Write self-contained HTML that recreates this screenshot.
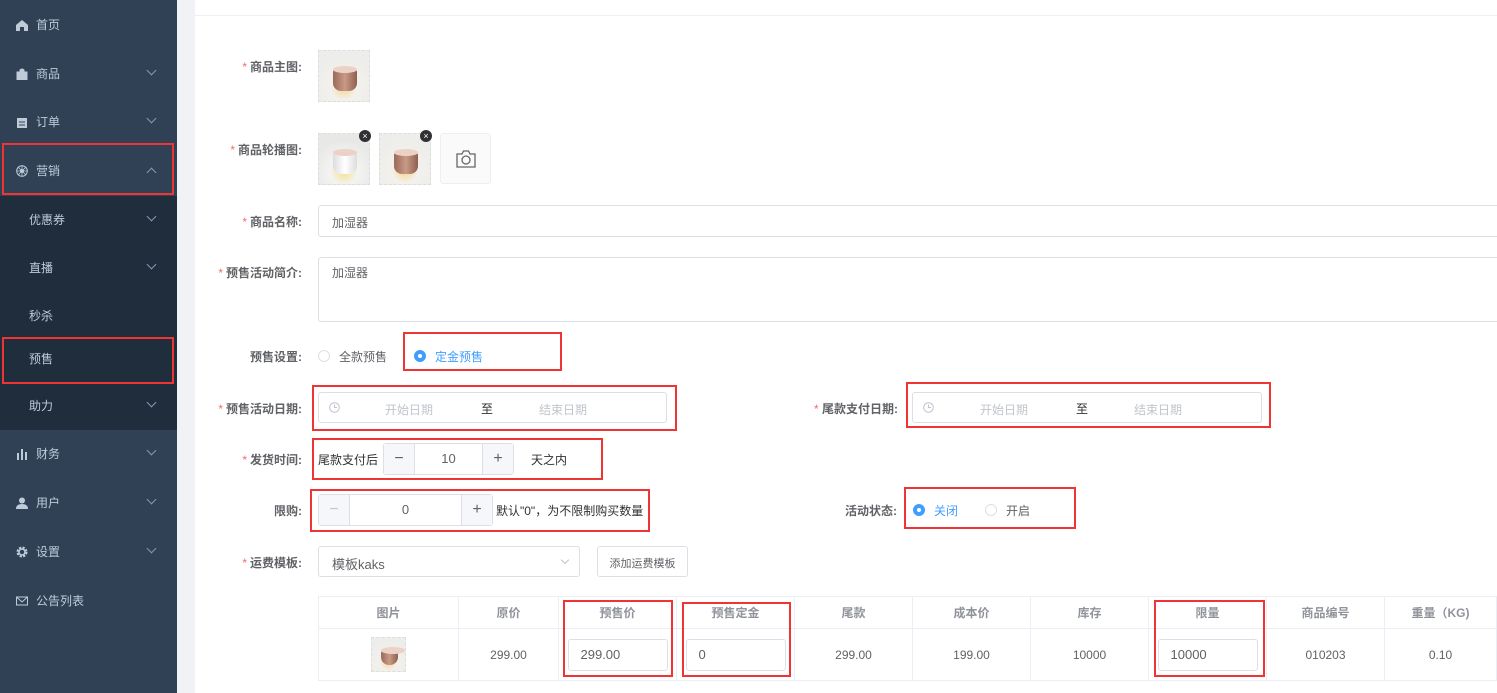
<!DOCTYPE html>
<html><head><meta charset="utf-8"><style>
*{box-sizing:border-box;margin:0;padding:0}
body{width:1497px;height:693px;overflow:hidden;background:#f0f2f5;font-family:"Liberation Sans","Noto Sans CJK SC",sans-serif;font-size:12px;color:#606266;position:relative}
.a{position:absolute}
#sb{left:0;top:0;width:177px;height:693px;background:#304156}
#sub{left:0;top:196px;width:177px;height:234px;background:#1f2d3d}
.mi{position:absolute;left:0;width:177px;color:#bfcbd9;font-size:12px;line-height:20px}
.mi .ic{position:absolute;left:16px;top:4px;width:12px;height:12px}
.mi .t{position:absolute;left:36px}
.mi .s{position:absolute;left:29px}
.mi .ar{position:absolute;left:148px;top:3px;width:7px;height:7px;border-right:1px solid #8a97a8;border-bottom:1px solid #8a97a8;transform:rotate(45deg)}
.mi .up{transform:rotate(-135deg);top:8px}
.red{position:absolute;border:2px solid #f03434}
#main{left:195px;top:0;width:1302px;height:693px;background:#fff}
.lbl{position:absolute;right:1195px;text-align:right;font-weight:bold;color:#606266;white-space:nowrap}
.lbl b{color:#f56c6c;font-weight:normal;margin-right:3px}
.inp{position:absolute;border:1px solid #dcdfe6;border-radius:3px;background:#fff;color:#606266}
.th{width:52px;height:52px;border:1px dashed #ddd;background:radial-gradient(circle at 50% 72%,#f5d48a 0,#f3f1ec 30%,#ededeb 70%);}
.cyl{position:absolute;left:14px;top:18px;width:24px;height:22px;border-radius:3px 3px 8px 8px;background:linear-gradient(90deg,#9a6a5a,#c99a86,#8f5e50)}
.cyl:before{content:"";position:absolute;left:0;top:-3px;width:24px;height:7px;border-radius:50%;background:#ecd2c6}
.x{position:absolute;width:12px;height:12px;border-radius:6px;background:#303133;color:#fff;font-size:9px;line-height:12px;text-align:center}
.rad{position:absolute;width:12px;height:12px;border-radius:6px;border:1px solid #dcdfe6;background:#fff}
.rad.on{background:#409eff;border-color:#409eff}
.rad.on:after{content:"";position:absolute;left:3px;top:3px;width:4px;height:4px;border-radius:2px;background:#fff}
.step{position:absolute;border:1px solid #dcdfe6;border-radius:3px;height:32px;background:#fff}
.step .bt{position:absolute;top:0;width:31px;height:30px;background:#f5f7fa;color:#606266;text-align:center;line-height:30px;font-size:16px}
table{position:absolute;left:318px;top:596px;width:1179px;border-collapse:collapse;font-size:12px;text-align:center}
td{border:1px solid #ebeef5;color:#606266}
tr.h td{height:32px;font-weight:bold;color:#909399}
tr.b td{height:52px}
.ti{display:inline-block;border:1px solid #dcdfe6;border-radius:3px;height:32px;width:100px;text-align:left;padding-left:12px;line-height:30px;font-size:13px}
</style></head><body>
<div id="sb" class="a"></div>
<div id="sub" class="a"></div>
<div class="mi" style="top:15px"><svg class="ic" viewBox="0 0 12 12"><path d="M0 6L6 1 12 6V12H8V8H4V12H0Z" fill="#bfcbd9"/></svg><span class="t">首页</span></div>
<div class="mi" style="top:64px"><svg class="ic" viewBox="0 0 12 12"><path d="M1 4H11V12H1Z M4 4V2Q6 0 8 2V4" fill="#bfcbd9" stroke="#bfcbd9"/></svg><span class="t">商品</span><i class="ar"></i></div>
<div class="mi" style="top:112px"><svg class="ic" viewBox="0 0 12 12"><path d="M1 2H11V12H1Z" fill="#bfcbd9"/><path d="M3 6H9M3 9H9" stroke="#304156"/></svg><span class="t">订单</span><i class="ar"></i></div>
<div class="mi" style="top:161px"><svg class="ic" viewBox="0 0 12 12"><circle cx="6" cy="6" r="5.3" fill="none" stroke="#bfcbd9"/><circle cx="6" cy="6" r="1.5" fill="none" stroke="#bfcbd9"/><path d="M6 1V11M1 6H11M2.5 2.5L9.5 9.5M9.5 2.5L2.5 9.5" stroke="#bfcbd9" stroke-width=".8"/></svg><span class="t">营销</span><i class="ar up"></i></div>
<div class="mi" style="top:210px"><span class="s">优惠券</span><i class="ar"></i></div>
<div class="mi" style="top:258px"><span class="s">直播</span><i class="ar"></i></div>
<div class="mi" style="top:306px"><span class="s">秒杀</span></div>
<div class="mi" style="top:349px"><span class="s">预售</span></div>
<div class="mi" style="top:396px"><span class="s">助力</span><i class="ar"></i></div>
<div class="mi" style="top:444px"><svg class="ic" viewBox="0 0 12 12"><path d="M1 5H3V12H1ZM5 1H7V12H5ZM9 4H11V12H9Z" fill="#bfcbd9"/></svg><span class="t">财务</span><i class="ar"></i></div>
<div class="mi" style="top:493px"><svg class="ic" viewBox="0 0 12 12"><circle cx="6" cy="3.5" r="3" fill="#bfcbd9"/><path d="M0 12Q0 7 6 7Q12 7 12 12Z" fill="#bfcbd9"/></svg><span class="t">用户</span><i class="ar"></i></div>
<div class="mi" style="top:542px"><svg class="ic" viewBox="0 0 12 12"><circle cx="6" cy="6" r="4" fill="none" stroke="#bfcbd9" stroke-width="3" stroke-dasharray="2 1.2"/><circle cx="6" cy="6" r="3" fill="none" stroke="#bfcbd9" stroke-width="1.5"/></svg><span class="t">设置</span><i class="ar"></i></div>
<div class="mi" style="top:591px"><svg class="ic" viewBox="0 0 12 12"><path d="M.5 2H11.5V10H.5ZM.5 2L6 7 11.5 2" fill="none" stroke="#bfcbd9"/></svg><span class="t">公告列表</span></div>
<div class="red" style="left:2px;top:143px;width:172px;height:52px"></div>
<div class="red" style="left:2px;top:337px;width:172px;height:47px"></div>

<div id="main" class="a"><div class="a" style="left:0;top:15px;width:1302px;height:1px;background:#eef0f4"></div></div>

<div class="lbl" style="top:58px"><b>*</b>商品主图:</div>
<div class="a th" style="left:318px;top:50px"><div class="cyl"></div></div>
<div class="lbl" style="top:141px"><b>*</b>商品轮播图:</div>
<div class="a th" style="left:318px;top:133px;background:radial-gradient(circle at 50% 75%,#f5e08a 0,#f3f3f1 30%,#e8e8e6 70%)"><div class="cyl" style="background:linear-gradient(90deg,#ddd,#fff,#ddd)"></div></div>
<div class="x" style="left:359px;top:130px">×</div>
<div class="a th" style="left:379px;top:133px"><div class="cyl"></div></div>
<div class="x" style="left:420px;top:130px">×</div>
<div class="a" style="left:440px;top:133px;width:51px;height:51px;border:1px solid #eee;border-radius:3px;background:#fafafa"><svg style="position:absolute;left:15px;top:16px" width="20" height="18" viewBox="0 0 20 18"><path d="M1 4H6L7.5 1H12.5L14 4H19V17H1Z" fill="none" stroke="#666" stroke-width="1.3"/><circle cx="10" cy="10" r="4" fill="none" stroke="#666" stroke-width="1.3"/></svg></div>

<div class="lbl" style="top:213px"><b>*</b>商品名称:</div>
<div class="inp" style="left:318px;top:205px;width:1190px;height:32px;padding:8px 13px">加湿器</div>
<div class="lbl" style="top:264px"><b>*</b>预售活动简介:</div>
<div class="inp" style="left:318px;top:257px;width:1190px;height:65px;padding:6px 13px">加湿器</div>

<div class="lbl" style="top:348px">预售设置:</div>
<div class="rad" style="left:318px;top:350px"></div><div class="a" style="left:339px;top:348px">全款预售</div>
<div class="rad on" style="left:414px;top:350px"></div><div class="a" style="left:435px;top:348px;color:#409eff">定金预售</div>
<div class="red" style="left:403px;top:332px;width:159px;height:39px"></div>

<div class="lbl" style="top:400px"><b>*</b>预售活动日期:</div>
<div class="inp" style="left:318px;top:392px;width:349px;height:31px"><svg class="a" style="left:10px;top:9px" width="11" height="11" viewBox="0 0 11 11"><circle cx="5.5" cy="5.5" r="4.8" fill="none" stroke="#c0c4cc"/><path d="M5.5 2.5V5.5H8" fill="none" stroke="#c0c4cc"/></svg><span class="a" style="left:66px;top:8px;color:#c0c4cc">开始日期</span><span class="a" style="left:162px;top:7px;color:#303133">至</span><span class="a" style="left:220px;top:8px;color:#c0c4cc">结束日期</span></div>
<div class="red" style="left:312px;top:385px;width:365px;height:46px"></div>
<div class="a" style="left:814px;top:400px;font-weight:bold"><b style="color:#f56c6c;font-weight:normal">*</b> 尾款支付日期:</div>
<div class="inp" style="left:912px;top:392px;width:350px;height:31px"><svg class="a" style="left:10px;top:9px" width="11" height="11" viewBox="0 0 11 11"><circle cx="5.5" cy="5.5" r="4.8" fill="none" stroke="#c0c4cc"/><path d="M5.5 2.5V5.5H8" fill="none" stroke="#c0c4cc"/></svg><span class="a" style="left:67px;top:8px;color:#c0c4cc">开始日期</span><span class="a" style="left:163px;top:7px;color:#303133">至</span><span class="a" style="left:221px;top:8px;color:#c0c4cc">结束日期</span></div>
<div class="red" style="left:906px;top:382px;width:365px;height:46px"></div>

<div class="lbl" style="top:451px"><b>*</b>发货时间:</div>
<div class="a" style="left:318px;top:451px;color:#303133">尾款支付后</div>
<div class="step" style="left:383px;top:443px;width:131px"><div class="bt" style="left:0;border-right:1px solid #dcdfe6">−</div><div class="a" style="left:31px;width:67px;top:7px;text-align:center;font-size:13px">10</div><div class="bt" style="right:0;border-left:1px solid #dcdfe6">+</div></div>
<div class="a" style="left:531px;top:451px;color:#303133">天之内</div>
<div class="red" style="left:312px;top:438px;width:291px;height:42px"></div>

<div class="lbl" style="top:502px">限购:</div>
<div class="step" style="left:318px;top:494px;width:175px"><div class="bt" style="left:0;border-right:1px solid #dcdfe6;color:#c0c4cc">−</div><div class="a" style="left:31px;width:111px;top:7px;text-align:center;font-size:13px">0</div><div class="bt" style="right:0;border-left:1px solid #dcdfe6">+</div></div>
<div class="a" style="left:496px;top:502px;color:#303133">默认"0"，为不限制购买数量</div>
<div class="red" style="left:310px;top:489px;width:340px;height:43px"></div>
<div class="a" style="left:845px;top:502px;font-weight:bold">活动状态:</div>
<div class="rad on" style="left:913px;top:504px"></div><div class="a" style="left:934px;top:502px;color:#409eff">关闭</div>
<div class="rad" style="left:985px;top:504px"></div><div class="a" style="left:1006px;top:502px">开启</div>
<div class="red" style="left:904px;top:487px;width:172px;height:42px"></div>

<div class="lbl" style="top:554px"><b>*</b>运费模板:</div>
<div class="inp" style="left:318px;top:546px;width:262px;height:31px;padding:7px 13px;font-size:13px">模板kaks<i class="a" style="left:243px;top:10px;width:6px;height:6px;border-right:1px solid #c0c4cc;border-bottom:1px solid #c0c4cc;transform:rotate(45deg)"></i></div>
<div class="inp" style="left:597px;top:546px;width:91px;height:31px;padding:8px 0;text-align:center;font-size:11px">添加运费模板</div>

<table><colgroup><col style="width:140px"><col style="width:100px"><col style="width:118px"><col style="width:118px"><col style="width:118px"><col style="width:118px"><col style="width:118px"><col style="width:118px"><col style="width:118px"><col></colgroup>
<tr class="h"><td>图片</td><td>原价</td><td>预售价</td><td>预售定金</td><td>尾款</td><td>成本价</td><td>库存</td><td>限量</td><td>商品编号</td><td>重量（KG)</td></tr>
<tr class="b"><td><div class="th" style="display:inline-block;width:35px;height:35px;position:relative;vertical-align:middle"><div class="cyl" style="left:9px;top:12px;width:17px;height:15px"></div></div></td><td>299.00</td><td><span class="ti">299.00</span></td><td><span class="ti">0</span></td><td>299.00</td><td>199.00</td><td>10000</td><td><span class="ti">10000</span></td><td>010203</td><td>0.10</td></tr>
</table>
<div class="red" style="left:563px;top:600px;width:110px;height:77px"></div>
<div class="red" style="left:682px;top:602px;width:109px;height:75px"></div>
<div class="red" style="left:1154px;top:600px;width:111px;height:77px"></div>
</body></html>
